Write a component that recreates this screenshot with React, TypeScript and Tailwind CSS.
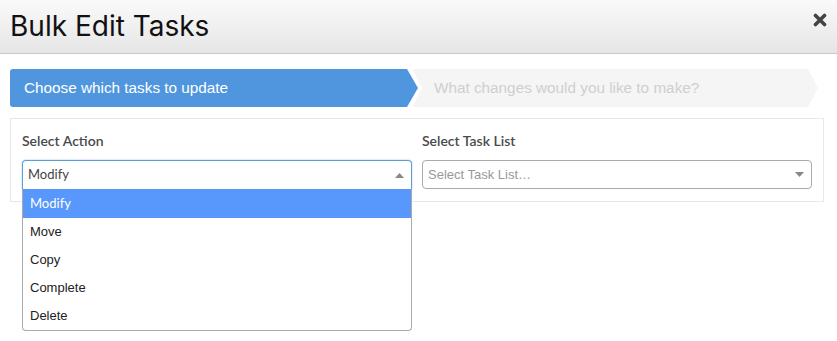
import React from 'react';

const actions = ['Modify', 'Move', 'Copy', 'Complete', 'Delete'];

function CloseIcon() {
  return (
    <svg width="14" height="14" viewBox="0 0 14 14" className="text-[#444] mb-[13px]">
      <path d="M2.5 2.5 L11.5 11.5 M11.5 2.5 L2.5 11.5" stroke="currentColor" strokeWidth="3.6" strokeLinecap="round" />
    </svg>
  );
}

function Caret({ up }: { up?: boolean }) {
  return (
    <svg width="9" height="5" viewBox="0 0 9 5">
      <path d={up ? 'M0 5 L4.5 0 L9 5 Z' : 'M0 0 L4.5 5 L9 0 Z'} fill="#888" />
    </svg>
  );
}

export default function App() {
  return (
    <div className="w-[837px] h-[341px] bg-white overflow-hidden font-['Lato',sans-serif]">
      {/* header */}
      <div className="h-[54px] flex items-center justify-between pl-[10px] pr-[10px] bg-gradient-to-b from-[#fafafa] to-[#e6e6e6] border-b border-[#c9c9c9]">
        <h1 className="text-[28px] font-['Inter',sans-serif] font-normal text-[#111] leading-none pb-[2px]">Bulk Edit Tasks</h1>
        <CloseIcon />
      </div>

      {/* steps */}
      <div className="flex mt-[15px] ml-[10px] h-[38px] font-['Liberation_Sans',Arial,sans-serif] text-[15.3px]">
        <div className="w-[408px] bg-[#5096de] text-white flex items-center pl-[14px] rounded-l-[3px] [clip-path:polygon(0_0,calc(100%-11px)_0,100%_50%,calc(100%-11px)_100%,0_100%)]">
          Choose which tasks to update
        </div>
        <div className="w-[406px] -ml-[6px] bg-[#f5f5f5] text-[#cfcfcf] flex items-center pl-[22px] [clip-path:polygon(0_0,calc(100%-10px)_0,100%_50%,calc(100%-10px)_100%,0_100%,10px_50%)]">
          What changes would you like to make?
        </div>
      </div>

      {/* card */}
      <div className="ml-[10px] mt-[11px] w-[814px] border border-[#e8e8e8] px-[11px] pt-[12px] pb-[12px] grid grid-cols-2 gap-[10px]">
        <div className="relative">
          <div className="text-[14px] font-semibold text-[#4a4a4a] leading-[20px] mb-[9px]">Select Action</div>
          <div className="h-[29px] border border-[#5b9dd9] border-b-0 rounded-t-[4px] flex items-center justify-between pl-[5px] pr-[7px] shadow-[0_0_2px_rgba(91,157,217,0.6)] text-[13px] text-[#444]">
            <span>Modify</span>
            <Caret up />
          </div>
          <div className="absolute left-0 right-0 top-[58px] bg-white border border-t-0 border-[#aaa] rounded-b-[4px] text-[13px] font-['Liberation_Sans',Arial,sans-serif] text-[#222] z-10">
            {actions.map((a, i) => (
              <div
                key={a}
                className={
                  i === 0
                    ? 'h-[29px] flex items-center pl-[7px] bg-[#5897fb] text-white font-["Lato",sans-serif]'
                    : 'h-[28px] flex items-center pl-[7px]'
                }
              >
                {a}
              </div>
            ))}
          </div>
        </div>
        <div>
          <div className="text-[14px] font-semibold text-[#4a4a4a] leading-[20px] mb-[9px]">Select Task List</div>
          <div className="h-[29px] border border-[#aaa] rounded-[4px] flex items-center justify-between pl-[5px] pr-[7px] text-[13px] text-[#999] font-['Liberation_Sans',Arial,sans-serif]">
            <span>Select Task List…</span>
            <Caret />
          </div>
        </div>
      </div>
    </div>
  );
}
